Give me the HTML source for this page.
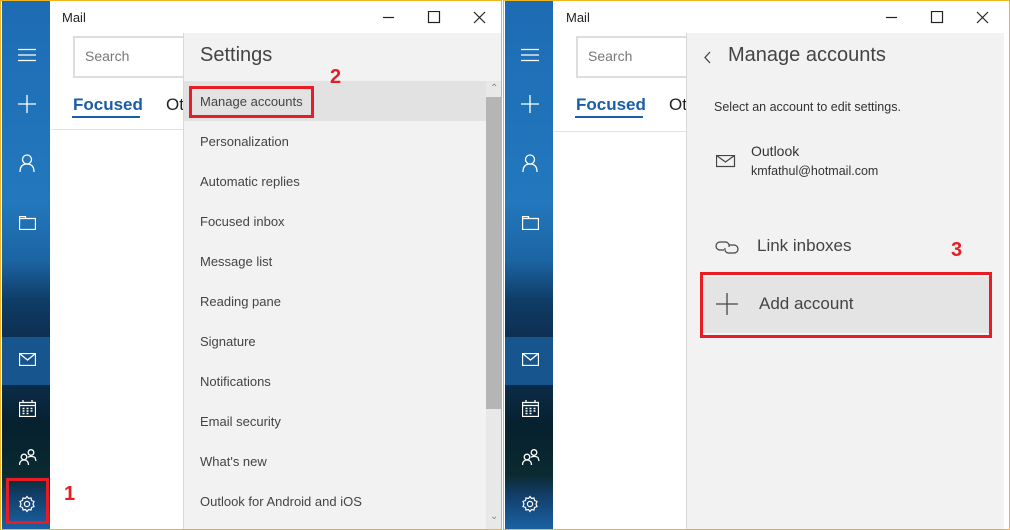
<!DOCTYPE html>
<html><head><meta charset="utf-8"><style>
*{margin:0;padding:0;box-sizing:border-box}
body{width:1010px;height:530px;position:relative;overflow:hidden;background:#fff;font-family:"Segoe UI","Liberation Sans",sans-serif;color:#333}
.a{position:absolute}
.win{position:absolute;top:0;height:530px;border:1px solid #f0b323;background:#fff;overflow:hidden}
.side{position:absolute;left:1px;top:0;width:48px;height:530px;background:linear-gradient(180deg,#1d6cb3 0,#2378bd 200px,#1c64a2 260px,#0f3c66 300px,#0d2f52 336px)}
.mailb{position:absolute;left:0;top:336px;width:48px;height:48px;background:#17558e}
.dark{position:absolute;left:0;top:384px;width:48px;height:146px;background:linear-gradient(180deg,#0b2c48 0,#06202e 40px,#0a2a30 90px,#123e68 110px,#1b64a8 146px)}
.t{font-size:13px;color:#222}
.pane{position:absolute;top:32px;background:#f2f2f2;border-left:1px solid #d8d8d8}
.item{position:absolute;left:16px;font-size:13px;color:#444}
.red{border:3px solid #e81c24;position:absolute}
.num{position:absolute;color:#e81c24;font-weight:bold;font-size:20px;font-family:"Liberation Sans",sans-serif}
svg{position:absolute}
</style></head><body>

<!-- LEFT WINDOW -->
<div class="win" style="left:0;width:502px">
 <div class="side">
  <div class="mailb"></div><div class="dark"></div>
  <svg style="left:16px;top:47px" width="18" height="14" stroke="#fff" stroke-width="1.3"><path d="M0 1.5H18M0 7H18M0 12.5H18"/></svg>
  <svg style="left:16px;top:94px" width="18" height="18" stroke="#fff" stroke-width="1.3"><path d="M9 0V18M0 9H18"/></svg>
  <svg style="left:17px;top:153px" width="16" height="18" stroke="#fff" stroke-width="1.3" fill="none"><circle cx="8" cy="5.5" r="4.5"/><path d="M1 18C1 12 4 10 8 10S15 12 15 18"/></svg>
  <svg style="left:17px;top:215px" width="17" height="14" stroke="#fff" stroke-width="1.3" fill="none"><path d="M0.5 2.5H16.5V13.5H0.5ZM0.5 2.5V0.5H6.5V2.5"/></svg>
  <svg style="left:17px;top:352px" width="17" height="13" stroke="#fff" stroke-width="1.3" fill="none"><rect x=".5" y=".5" width="16" height="12"/><path d="M.5 .5L8.5 7L16.5 .5"/></svg>
  <svg style="left:17px;top:399px" width="17" height="17" stroke="#fff" stroke-width="1.3" fill="none"><rect x=".5" y="2.5" width="16" height="14"/><path d="M.5 5.5H16.5M4 0V3M13 0V3"/><path d="M3.5 8.5h2M7.5 8.5h2M11.5 8.5h2M3.5 11h2M7.5 11h2M11.5 11h2M3.5 13.5h2M7.5 13.5h2" stroke-width="1.5"/></svg>
  <svg style="left:17px;top:448px" width="18" height="16" stroke="#fff" stroke-width="1.3" fill="none"><circle cx="5" cy="8" r="2.8"/><path d="M.5 16C.5 12.5 2.5 11 5 11S9.5 12.5 9.5 16"/><circle cx="12" cy="3.5" r="2.8"/><path d="M9 8.5C10 7 14 7 16 8.5L17 12"/></svg>
  <svg style="left:16px;top:494px" width="18" height="18" stroke="#fff" stroke-width="1.2" fill="none"><path d="M9 1.5L10.5 3.5L13 3L13.5 5.5L16 6.5L15 9L16 11.5L13.5 12.5L13 15L10.5 14.5L9 16.5L7.5 14.5L5 15L4.5 12.5L2 11.5L3 9L2 6.5L4.5 5.5L5 3L7.5 3.5Z"/><circle cx="9" cy="9" r="2.6"/></svg>
 </div>
 <div class="a t" style="left:61px;top:9px">Mail</div>
 <div class="a" style="left:72px;top:35px;width:120px;height:42px;border:2px solid #ddd"></div>
 <div class="a" style="left:84px;top:47px;font-size:14px;color:#777">Search</div>
 <div class="a" style="left:72px;top:94px;font-size:17px;font-weight:bold;color:#1a5ea8">Focused</div>
 <div class="a" style="left:71px;top:115px;width:68px;height:2px;background:#1a5ea8"></div>
 <div class="a" style="left:165px;top:94px;font-size:17px;color:#222">Ot</div>
 <div class="a" style="left:50px;top:128px;width:140px;height:1px;background:#e2e2e2"></div>
 <svg style="left:378px;top:10px" width="120" height="14" stroke="#222" stroke-width="1.2" fill="none"><path d="M4 6.5H15"/><rect x="49.5" y=".5" width="11" height="11"/><path d="M95 1L106 12M106 1L95 12"/></svg>
 <div class="pane" style="left:182px;width:318px;height:498px">
  <div class="a" style="left:16px;top:11px;font-size:20px;color:#444">Settings</div>
  <div class="a" style="left:0;top:48px;width:302px;height:40px;background:#e2e2e2"></div>
  <div class="item" style="top:61px">Manage accounts</div>
  <div class="item" style="top:101px">Personalization</div>
  <div class="item" style="top:141px">Automatic replies</div>
  <div class="item" style="top:181px">Focused inbox</div>
  <div class="item" style="top:221px">Message list</div>
  <div class="item" style="top:261px">Reading pane</div>
  <div class="item" style="top:301px">Signature</div>
  <div class="item" style="top:341px">Notifications</div>
  <div class="item" style="top:381px">Email security</div>
  <div class="item" style="top:421px">What's new</div>
  <div class="item" style="top:461px">Outlook for Android and iOS</div>
  <div class="a" style="left:302px;top:48px;width:16px;height:450px;background:#e8e8e8"></div>
  <div class="a" style="left:302px;top:64px;width:16px;height:312px;background:#b5b5b5"></div>
  <div class="a" style="left:306px;top:50px;font-size:10px;color:#888">&#8963;</div>
  <div class="a" style="left:306px;top:478px;font-size:10px;color:#888">&#8964;</div>
 </div>
 <div class="red" style="left:188px;top:85px;width:125px;height:32px"></div>
 <div class="num" style="left:329px;top:65px">2</div>
 <div class="red" style="left:5px;top:477px;width:43px;height:46px"></div>
 <div class="num" style="left:63px;top:482px">1</div>
</div>

<!-- RIGHT WINDOW -->
<div class="win" style="left:503px;width:507px">
 <div class="side" style="left:1px">
  <div class="mailb"></div><div class="dark"></div>
  <svg style="left:16px;top:47px" width="18" height="14" stroke="#fff" stroke-width="1.3"><path d="M0 1.5H18M0 7H18M0 12.5H18"/></svg>
  <svg style="left:16px;top:94px" width="18" height="18" stroke="#fff" stroke-width="1.3"><path d="M9 0V18M0 9H18"/></svg>
  <svg style="left:17px;top:153px" width="16" height="18" stroke="#fff" stroke-width="1.3" fill="none"><circle cx="8" cy="5.5" r="4.5"/><path d="M1 18C1 12 4 10 8 10S15 12 15 18"/></svg>
  <svg style="left:17px;top:215px" width="17" height="14" stroke="#fff" stroke-width="1.3" fill="none"><path d="M0.5 2.5H16.5V13.5H0.5ZM0.5 2.5V0.5H6.5V2.5"/></svg>
  <svg style="left:17px;top:352px" width="17" height="13" stroke="#fff" stroke-width="1.3" fill="none"><rect x=".5" y=".5" width="16" height="12"/><path d="M.5 .5L8.5 7L16.5 .5"/></svg>
  <svg style="left:17px;top:399px" width="17" height="17" stroke="#fff" stroke-width="1.3" fill="none"><rect x=".5" y="2.5" width="16" height="14"/><path d="M.5 5.5H16.5M4 0V3M13 0V3"/><path d="M3.5 8.5h2M7.5 8.5h2M11.5 8.5h2M3.5 11h2M7.5 11h2M11.5 11h2M3.5 13.5h2M7.5 13.5h2" stroke-width="1.5"/></svg>
  <svg style="left:17px;top:448px" width="18" height="16" stroke="#fff" stroke-width="1.3" fill="none"><circle cx="5" cy="8" r="2.8"/><path d="M.5 16C.5 12.5 2.5 11 5 11S9.5 12.5 9.5 16"/><circle cx="12" cy="3.5" r="2.8"/><path d="M9 8.5C10 7 14 7 16 8.5L17 12"/></svg>
  <svg style="left:16px;top:494px" width="18" height="18" stroke="#fff" stroke-width="1.2" fill="none"><path d="M9 1.5L10.5 3.5L13 3L13.5 5.5L16 6.5L15 9L16 11.5L13.5 12.5L13 15L10.5 14.5L9 16.5L7.5 14.5L5 15L4.5 12.5L2 11.5L3 9L2 6.5L4.5 5.5L5 3L7.5 3.5Z"/><circle cx="9" cy="9" r="2.6"/></svg>
 </div>
 <div class="a t" style="left:62px;top:9px">Mail</div>
 <div class="a" style="left:72px;top:35px;width:120px;height:42px;border:2px solid #ddd"></div>
 <div class="a" style="left:84px;top:47px;font-size:14px;color:#777">Search</div>
 <div class="a" style="left:72px;top:94px;font-size:17px;font-weight:bold;color:#1a5ea8">Focused</div>
 <div class="a" style="left:71px;top:115px;width:68px;height:2px;background:#1a5ea8"></div>
 <div class="a" style="left:165px;top:94px;font-size:17px;color:#222">Ot</div>
 <div class="a" style="left:50px;top:130px;width:140px;height:1px;background:#e2e2e2"></div>
 <svg style="left:378px;top:10px" width="120" height="14" stroke="#222" stroke-width="1.2" fill="none"><path d="M4 6.5H15"/><rect x="49.5" y=".5" width="11" height="11"/><path d="M95 1L106 12M106 1L95 12"/></svg>
 <div class="pane" style="left:182px;width:318px;height:498px">
  <svg style="left:17px;top:18px" width="8" height="14" stroke="#444" stroke-width="1.3" fill="none"><path d="M6 1L1 6.5L6 12"/></svg>
  <div class="a" style="left:41px;top:11px;font-size:20px;color:#444">Manage accounts</div>
  <div class="a" style="left:27px;top:67px;font-size:12.5px;color:#333">Select an account to edit settings.</div>
  <svg style="left:29px;top:122px" width="20" height="13" stroke="#444" stroke-width="1.2" fill="none"><rect x=".5" y=".5" width="18" height="11"/><path d="M.5 .5L9.5 7L18.5 .5"/></svg>
  <div class="a" style="left:64px;top:110px;font-size:14px;color:#333">Outlook</div>
  <div class="a" style="left:64px;top:131px;font-size:12.5px;color:#333">kmfathul@hotmail.com</div>
  <svg style="left:28px;top:205px" width="24" height="20" stroke="#444" stroke-width="1.2" fill="none"><path d="M9 12H5A4 4 0 0 1 5 4H11A4 4 0 0 1 14 9"/><path d="M14 7H19A4 4 0 0 1 19 15H13A4 4 0 0 1 10 10"/></svg>
  <div class="a" style="left:70px;top:203px;font-size:17px;color:#444">Link inboxes</div>
  <div class="a" style="left:16px;top:244px;width:286px;height:56px;background:#e4e4e4"></div>
  <svg style="left:29px;top:260px" width="22" height="22" stroke="#444" stroke-width="1.3"><path d="M11 0V22M0 11H22"/></svg>
  <div class="a" style="left:72px;top:261px;font-size:17px;color:#444">Add account</div>
 </div>
 <div class="red" style="left:196px;top:271px;width:292px;height:66px"></div>
 <div class="num" style="left:447px;top:238px">3</div>
</div>
</body></html>
